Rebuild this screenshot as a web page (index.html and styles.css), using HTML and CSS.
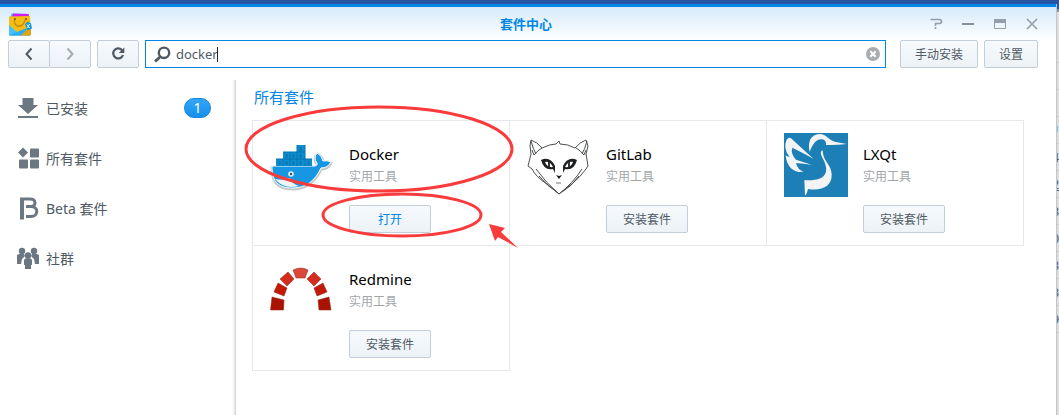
FILE: index.html
```html
<!DOCTYPE html>
<html lang="zh-CN">
<head>
<meta charset="utf-8">
<meta name="viewport" content="width=device-width, initial-scale=1">
<title>套件中心</title>
<link rel="stylesheet" href="styles.css">
</head>
<body>
<div class="desktop">
  <section class="window">
    <header class="titlebar">
      <svg class="app-icon" viewBox="0 0 24 24" aria-hidden="true">
        <path d="M2.500 5 3.500 1.500 21 2v5H3z" fill="#35c9f2"/>
        <path d="M5 1.500 20.500 2v4H4z" fill="#d41cf0"/>
        <path d="M1 4.500 22 4l1 18.500-1 1H2l-1-1z" fill="#f5bd12"/>
        <path d="M1 13 13 23.500H2l-1-1z" fill="#43c3fa"/>
        <path d="M1 23 19 16l4 5v1.500l-1 1H2z" fill="#2aaef5"/>
        <path d="M13 23.500 23 13v9.500l-1 1z" fill="#e2a40c"/>
        <path d="M6.500 7C5 16 15 17 17 8" fill="none" stroke="#c88c12" stroke-width="1.400"/>
        <circle cx="7" cy="7" r="1" fill="#7a5208"/><circle cx="18" cy="7" r="1" fill="#7a5208"/>
        <path d="m17 12 3-2.500 3 2 1 5-4.500 2z" fill="#1598dc"/>
        <path d="m19 12.500 2.500 3.500M21.500 12l-2 4" stroke="#e8faff"/>
      </svg>
      <h1 class="title">套件中心</h1>
      <div class="window-controls">
        <button class="control" type="button" aria-label="帮助"><svg viewBox="0 0 12 12"><path d="M.500 1.500H9.500q2 0 2 2t-2 2H5.500V8M5.500 9v2" fill="none" stroke="#929fab" stroke-width="1.600"/></svg></button>
        <button class="control" type="button" aria-label="最小化"><svg viewBox="0 0 12 12"><path d="M0 6h12" fill="none" stroke="#8492a0" stroke-width="2"/></svg></button>
        <button class="control" type="button" aria-label="最大化"><svg viewBox="0 0 12 12"><path d="M.500 2.500h11v8H.500z" fill="none" stroke="#929fab"/><path d="M0 1h12v4H0z" fill="#929fab"/></svg></button>
        <button class="control" type="button" aria-label="关闭"><svg viewBox="0 0 12 12"><path d="m1 1 10 10M11 1 1 11" fill="none" stroke="#929fab" stroke-width="1.600"/></svg></button>
      </div>
    </header>

    <div class="toolbar">
      <div class="nav-group">
        <button class="btn icon-btn" type="button" aria-label="后退"><svg viewBox="0 0 16 16"><path d="M10.500 2.500 5.500 8l5 5.500" fill="none" stroke="#505a64" stroke-width="2"/></svg></button>
        <button class="btn icon-btn" type="button" aria-label="前进"><svg viewBox="0 0 16 16"><path d="m5.500 2.500 5 5.500-5 5.500" fill="none" stroke="#a4adb6" stroke-width="2"/></svg></button>
      </div>
      <button class="btn icon-btn" type="button" aria-label="刷新"><svg viewBox="0 0 16 16"><path d="M12.300 4.500A5 5 0 1 0 13 9" fill="none" stroke="#505a64" stroke-width="2.200"/><path d="M14.300 1.500V7H8.800z" fill="#505a64"/></svg></button>
      <div class="search">
        <svg class="search-icon" viewBox="0 0 17 17" aria-hidden="true"><circle cx="10" cy="6.800" r="5.200" fill="none" stroke="#505a64" stroke-width="2.400"/><path d="m6 11-5 4.500" stroke="#505a64" stroke-width="3"/></svg>
        <input class="search-input" type="text" value="docker" aria-label="搜索">
        <span class="caret"></span>
        <button class="clear" type="button" aria-label="清除"><svg viewBox="0 0 14 14"><circle cx="7" cy="7" r="7" fill="#a9adb1"/><path d="m4.300 4.300 5.400 5.400M9.700 4.300 4.300 9.700" stroke="#fff" stroke-width="2"/></svg></button>
      </div>
      <div class="actions">
        <button class="btn" type="button">手动安装</button>
        <button class="btn" type="button">设置</button>
      </div>
    </div>

    <div class="body">
      <nav class="sidebar">
        <a class="side-item" href="#installed">
          <svg viewBox="0 0 22 22" fill="#6b7884"><path d="M6.500 1h11v7H22l-10 9L2 8h4.500z"/><path d="M2 19h20v2H2z"/></svg>
          <span>已安装</span><span class="badge">1</span>
        </a>
        <a class="side-item" href="#all">
          <svg viewBox="0 0 22 22" fill="#6b7884"><path d="m7 .500 5 5-5 5-5-5z"/><rect x="14" y="1.500" width="9" height="9" rx="1"/><rect x="3" y="12.500" width="9" height="9" rx="1"/><rect x="14" y="12.500" width="9" height="9" rx="1"/></svg>
          <span>所有套件</span>
        </a>
        <a class="side-item" href="#beta">
          <svg viewBox="0 0 22 22"><path d="M6 22.500V1.500" fill="none" stroke="#6b7884" stroke-width="4"/><path d="M4 2H14c6.500 0 6.500 7.500 1 7.500H10M15 9.500c8 0 7.500 10 0 10H10" fill="none" stroke="#6b7884" stroke-width="3"/></svg>
          <span>Beta 套件</span>
        </a>
        <a class="side-item" href="#community">
          <svg viewBox="0 0 22 22" fill="#6b7884"><g transform="translate(1 0)"><circle cx="5" cy="4" r="3.200"/><circle cx="17" cy="4" r="3.200"/><path d="M0 8q3-2 7-1l1 2-3 3-1 5H0zM22 8q-3-2-7-1l-1 2 3 3 1 5h4z"/><circle cx="11" cy="8.500" r="3.200"/><path d="M7 13.500q0-2.500 4-2.500t4 2.500V18h-1v4H8v-4H7z"/></g></svg>
          <span>社群</span>
        </a>
      </nav>

      <main class="content">
        <h2 class="section-title">所有套件</h2>
        <div class="grid">
          <article class="card">
            <svg class="logo" viewBox="0 0 64 64" aria-hidden="true">
              <path d="M2 33h43q3-1 2-3-4-5 0-10 5 2 6 8 4-1 8 1-3 6-10 6C45 48 36 55 22 55 6 55 2 46 2 33z" transform="translate(0 1)" fill="none" stroke="#c6c9cc" stroke-width="3" stroke-linejoin="round"/>
              <path d="M2 33h43q3-1 2-3-4-5 0-10 5 2 6 8 4-1 8 1-3 6-10 6C45 48 36 55 22 55 6 55 2 46 2 33z" fill="#1797e3" stroke="#fff" stroke-width="1"/>
              <path d="M5 46q9 2 15-1 2 6 9 8-15 4-24-7z" fill="#edf5f8"/>
              <path d="M27 12h8v7h-8zM13 19h22v7H13zM6 26h36v7H6z" fill="#0d8dd0"/>
              <path d="M6 26h36M13 19h22M13 26v7M20 19v14M27 12v21M35 12v21" fill="none" stroke="#0575ad"/>
              <path d="M9.500 28v4M16.500 21v4M16.500 28v4M23.500 21v4M23.500 28v4M30.500 14v4M30.500 21v4M30.500 28v4M38.500 28v4" fill="none" stroke="#0878b3" stroke-width="2"/>
              <circle cx="21" cy="41" r="2.800" fill="#e2edf2"/><circle cx="21" cy="41" r="1.200" fill="#24516a"/>
            </svg>
            <div class="info"><h3 class="name">Docker</h3><p class="category">实用工具</p><button class="btn package-btn open" type="button">打开</button></div>
          </article>
          <article class="card">
            <svg class="logo" viewBox="0 0 64 64" aria-hidden="true">
              <g fill="none" stroke="#4b4e50" stroke-width="1" stroke-linejoin="round">
                <path d="m4 21-1-8 1-6q6 2 11 8 8-4 14-4l3-3 1 3q8 0 15 4 5-6 11-8l2 6-2 8 2 12-2 3q-6 8-13 14L32 61l-12-10Q9 44 5 36l-4-3z"/>
                <path d="M4 8q2 8 5 13M5 17l2 5q4-5 8-7M60 8q-2 8-5 13M59 17l-2 5q-4-5-8-7"/>
                <path d="M9 36q10 14 23 25M55 36q-9 14-23 25M12 43q9 11 18 16M52 43q-8 11-17 16"/>
              </g>
              <path d="M14 27q9-4 14 6v7l-2-4q-9 2-12-9z" fill="#1d1f21"/><path d="M50 27q-9-4-14 6v7l2-4q9 2 12-9z" fill="#1d1f21"/>
              <path d="M18 29q5-1 8 5-6 1-8-5zM46 29q-5-1-8 5 6 1 8-5z" fill="#fff"/><path d="M22 29v5M42 29v5" stroke="#333" stroke-width="2"/>
              <path d="m29 42 3 1 3-1-3 4z" fill="#151719"/><path d="M29 50h5" stroke="#777"/>
            </svg>
            <div class="info"><h3 class="name">GitLab</h3><p class="category">实用工具</p><button class="btn package-btn" type="button">安装套件</button></div>
          </article>
          <article class="card">
            <svg class="logo" viewBox="0 0 192 192" aria-hidden="true">
              <path d="M0 0h192v192H0z" fill="#1c80b7"/>
              <g fill="#f2f4f5"><path d="M88 77 21 16q-6-5-13 4-12 25 9 52-8-1-12-5 4 43 39 50l15-1q-18-5-23-26 23 2 47 5L36 80Q19 61 25 44q29 14 63 33z"/><path d="M77 56C70 28 80 3 107 3c21 0 26 18 45 23l36 7q-31 4-62 3 2-13-11-17C99 15 86 32 77 56z"/><path d="M116 52q-10 3-2 20c30 51 5 74-53 69l2 47q7-6 9-20c41 7 73-8 71-45-2-30-27-37-27-71z"/></g>
            </svg>
            <div class="info"><h3 class="name">LXQt</h3><p class="category">实用工具</p><button class="btn package-btn" type="button">安装套件</button></div>
          </article>
          <article class="card">
            <svg class="logo" viewBox="0 0 64 64" aria-hidden="true">
              <g stroke="#8d2118" stroke-width=".5"><path d="m2 39 12 3-.5 10H.5z" fill="#aa1302"/><path d="m8 25 9 5-3 8-10-4z" fill="#c41a05"/><path d="m18 14 6 7-7 7-7-7z" fill="#d32d1d"/><path d="M23 12q8-4 15 0l-3 8h-9z" fill="#da4939"/><path d="m44 14 7 7-7 7-7-7z" fill="#d32d1d"/><path d="m53 25 4 9-10 4-3-8z" fill="#c41a05"/><path d="m59 39 2 13H49l-1-10z" fill="#aa1302"/></g>
            </svg>
            <div class="info"><h3 class="name">Redmine</h3><p class="category">实用工具</p><button class="btn package-btn" type="button">安装套件</button></div>
          </article>
        </div>
        <svg class="annotation" viewBox="0 0 280 150" aria-hidden="true">
          <g fill="none" stroke="#fa3b3b" stroke-width="3"><ellipse cx="139" cy="49" rx="133" ry="42"/><ellipse cx="162" cy="115" rx="79" ry="21"/></g>
          <path d="m249 124 16 4-4 4 17 16-20-11-3 4z" fill="#fa3b3b"/>
        </svg>
      </main>
    </div>
  </section>
  <aside class="behind">
    <div class="behind-top"></div>
    <ul class="behind-rows"><li></li><li></li><li></li><li class="link">户</li><li>4</li><li class="underlined">2</li><li>3</li><li>0</li><li>3</li><li>3</li><li>9</li></ul>
  </aside>
</div>
</body>
</html>
```

FILE: styles.css
```css
* { box-sizing: border-box; }

body {
  margin: 0;
  font-family: "Noto Sans", "Noto Sans CJK SC", sans-serif;
  font-size: 12px;
  color: #505a64;
}

h1, h2, h3, p, ul { margin: 0; padding: 0; font-weight: 400; }
button, input { font: inherit; color: inherit; }
svg { display: block; flex: none; overflow: visible; }

.desktop {
  display: flex;
  min-height: 100vh;
  padding-top: 4px;
  background: #2856a5;
}

.window {
  display: flex;
  flex-direction: column;
  flex: 1;
  min-width: 0;
  background: #fff;
  border-top: 3px solid #0086e5;
}

.titlebar {
  display: grid;
  grid-template-columns: 116px 1fr 112px;
  align-items: center;
  height: 33px;
  padding: 0 16px 0 8px;
  background: linear-gradient(#d5eafa, #fff);
}

.app-icon { width: 24px; height: 24px; }

.title {
  font-size: 13px;
  line-height: 20px;
  font-weight: 700;
  text-align: center;
  color: #0086e5;
}

.window-controls { display: flex; justify-content: flex-end; gap: 16px; }

.control, .clear {
  padding: 0;
  border: 0;
  background: none;
}

.control { padding: 2px; }
.control svg { width: 12px; height: 12px; }

.toolbar {
  display: flex;
  gap: 6px;
  padding: 0 18px 0 8px;
}

.btn {
  height: 28px;
  padding: 2px 14px 0;
  border: 1px solid #c3cedb;
  border-radius: 2px;
  background: linear-gradient(#f6fafd, #edf2f7);
  line-height: 18px;
  white-space: nowrap;
}

.icon-btn {
  display: flex;
  align-items: center;
  justify-content: center;
  width: 42px;
  padding: 0;
}

.icon-btn svg { width: 16px; height: 16px; }
.nav-group { display: flex; }
.nav-group .btn + .btn { margin-left: -1px; }

.search {
  display: flex;
  align-items: center;
  flex: 1;
  height: 28px;
  padding: 0 5px 0 8px;
  border: 1px solid #0086e5;
}

.search-icon { width: 17px; height: 17px; }

.search-input {
  field-sizing: content;
  margin-left: 5px;
  padding: 0;
  border: 0;
  outline: 0;
  background: none;
  font-size: 13px;
}

.caret { width: 1px; height: 15px; margin-left: -1px; background: #20252a; }
.clear { margin-left: auto; }
.clear svg { width: 14px; height: 14px; }

.actions { display: flex; gap: 6px; margin-left: 8px; }

.body { display: flex; flex: 1; margin-top: 12px; }

.sidebar {
  width: 236px;
  padding: 3px 24px 0 16px;
  border-right: 1px solid #d5d8da;
  box-shadow: inset -3px 0 3px -2px #dfe1e3;
}

.side-item {
  display: flex;
  align-items: center;
  height: 50px;
  gap: 8px;
  color: #505a64;
  font-size: 14px;
  text-decoration: none;
}

.side-item svg { width: 22px; height: 22px; }

.badge {
  width: 27px;
  height: 20px;
  margin-left: auto;
  border: 1px solid #1683d7;
  border-radius: 10px;
  background: linear-gradient(#35a5fa, #1590eb);
  color: #fff;
  font-size: 14px;
  line-height: 18px;
  text-align: center;
}

.content {
  position: relative;
  flex: 1;
  min-width: 0;
  padding: 6px 32px 12px 16px;
}

.section-title {
  margin-bottom: 12px;
  padding-left: 2px;
  color: #0086e5;
  font-size: 15px;
  line-height: 22px;
}

.grid {
  display: grid;
  grid-template-columns: repeat(3, 1fr);
  padding: 0 1px 1px 0;
}

.card {
  display: flex;
  gap: 15px;
  margin: 0 -1px -1px 0;
  padding: 12px 17px;
  border: 1px solid #e6e9ec;
}

.logo { width: 64px; height: 64px; }
.info { padding-top: 10px; }

.name {
  color: #000;
  font-size: 15px;
  line-height: 22px;
}

.category {
  margin: 2px 0 18px;
  color: #a2a6aa;
  line-height: 20px;
}

.package-btn { width: 82px; }
.open { color: #0086e5; }

.annotation {
  position: absolute;
  top: 20px;
  left: 4px;
  width: 280px;
  height: 150px;
  pointer-events: none;
}

.behind {
  width: 3px;
  overflow: hidden;
  background: #dcdee1;
  border-left: 1px solid #c3c5c8;
}

.behind-top {
  height: 14px;
  background: linear-gradient(#2856a5 5px, #8791a0 5px 8px, #dcdee1 8px);
}

.behind-rows { padding-top: 18px; list-style: none; }

.behind-rows li {
  display: flex;
  justify-content: flex-end;
  height: 27px;
  border-bottom: 1px solid #c9cccf;
  line-height: 28px;
}

.behind-rows .link { color: #0086e5; }
.behind-rows .underlined { text-decoration: underline; }
```
